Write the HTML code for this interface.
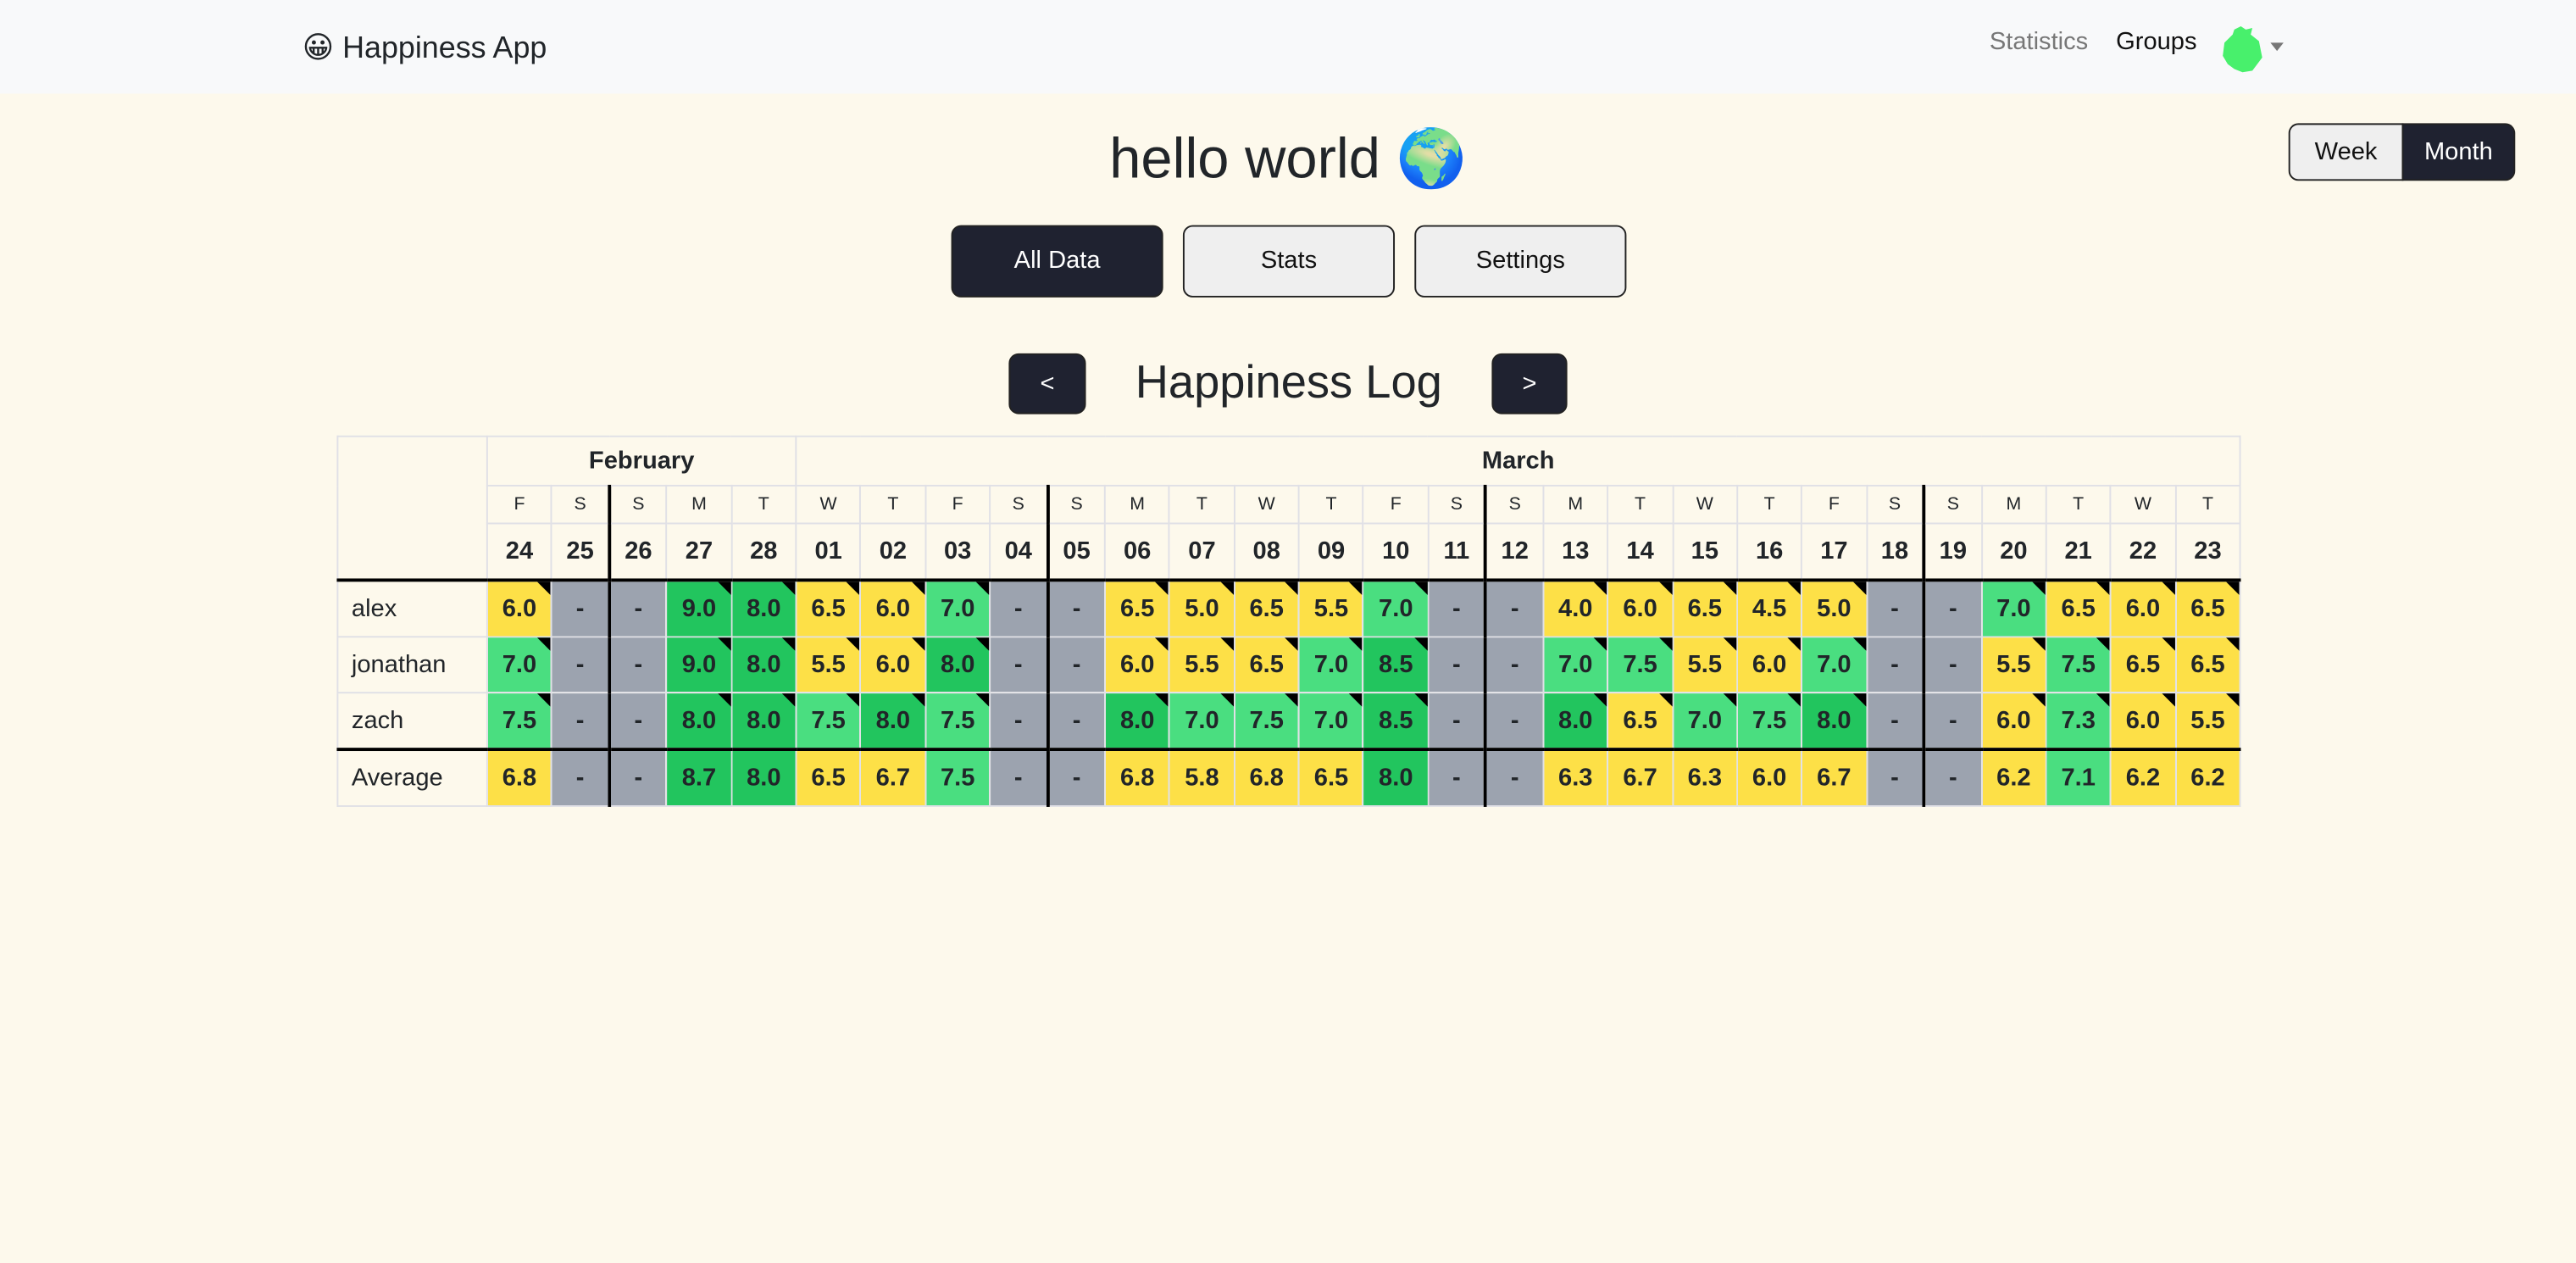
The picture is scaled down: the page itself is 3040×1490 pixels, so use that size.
<!DOCTYPE html>
<html><head><meta charset="utf-8"><style>
html,body{margin:0;padding:0;background:#fdf9ec;width:3040px;height:1490px;overflow:hidden}
#w{width:1568px;height:769px;transform:scale(1.93878);transform-origin:0 0;position:relative;font-family:"Liberation Sans","DejaVu Sans",sans-serif;color:#212529}
.nav{position:absolute;left:0;top:0;width:1568px;height:57px;background:#f8f9fa}
.brand{position:absolute;left:184px;top:18px;font-size:18.5px}
.nl{position:absolute;top:17px;font-size:15px}
.btn{position:absolute;box-sizing:border-box;border:1px solid #222;border-radius:6px;text-align:center;font-size:15px}
.dk{background:#1f2230;color:#fff}.lt{background:#efefef;color:#111}
h1{position:absolute;left:0;width:1568px;top:77px;margin:0;text-align:center;font-size:34.5px;font-weight:500}
.h2{position:absolute;left:691px;top:217px;font-size:28px;font-weight:500}
table{position:absolute;left:205px;top:265px;border-collapse:collapse;table-layout:fixed;width:1159px}
td{border:1px solid #e0e0e6;text-align:center;padding:0;font-size:15px;font-weight:bold;position:relative}
.mh td{height:29px}.dl td{height:22px;font-size:11px;font-weight:500}.dn td{height:33px}
.r td{height:33px}
td.nm{text-align:left;padding-left:8px;font-weight:normal}
.y{background:#fde047}.g{background:#4ade80}.G{background:#22c55e}.x{background:#9ca3af}
.tri::after{content:"";position:absolute;right:0;top:0;border-top:8px solid #000;border-left:8px solid transparent}
.sun{border-left:2px solid #000}
.tb td{border-top:2px solid #000}
</style></head><body><div id="w">
<div class="nav"><div class="brand">😀 Happiness App</div>
<div class="nl" style="left:1211px;color:#777">Statistics</div>
<div class="nl" style="left:1288px;color:#111">Groups</div>
<svg style="position:absolute;left:1350px;top:15px" width="30" height="30" viewBox="0 0 30 30"><path d="M10 3 L14 1 L17 3 L21 2 L20 6 L25 10 L27 20 L24 24 L21 28 L15 29 L10 27 L6 24 L3 19 L4 11 L9 6 Z" fill="#48f06c"/></svg>
<div style="position:absolute;left:1382px;top:26px;border-top:5px solid #777;border-left:4px solid transparent;border-right:4px solid transparent"></div>
</div>
<div class="btn lt" style="left:1393px;top:75px;width:70px;height:35px;line-height:33px;border-radius:6px 0 0 6px">Week</div>
<div class="btn dk" style="left:1462px;top:75px;width:69px;height:35px;line-height:33px;border-radius:0 6px 6px 0">Month</div>
<h1>hello world 🌍</h1>
<div class="btn dk" style="left:579px;top:137px;width:129px;height:44px;line-height:42px">All Data</div>
<div class="btn lt" style="left:720px;top:137px;width:129px;height:44px;line-height:42px">Stats</div>
<div class="btn lt" style="left:861px;top:137px;width:129px;height:44px;line-height:42px">Settings</div>
<div class="btn dk" style="left:614px;top:215px;width:47px;height:37px;line-height:35px">&lt;</div>
<div class="h2">Happiness Log</div>
<div class="btn dk" style="left:908px;top:215px;width:46px;height:37px;line-height:35px">&gt;</div>
<table id="t"></table>
</div>
<script>
var d=["24F","25S","26S","27M","28T","01W","02T","03F","04S","05S","06M","07T","08W","09T","10F","11S","12S","13M","14T","15W","16T","17F","18S","19S","20M","21T","22W","23T"];
var rows=[["alex","6.0 - - 9.0 8.0 6.5 6.0 7.0 - - 6.5 5.0 6.5 5.5 7.0 - - 4.0 6.0 6.5 4.5 5.0 - - 7.0 6.5 6.0 6.5"],
["jonathan","7.0 - - 9.0 8.0 5.5 6.0 8.0 - - 6.0 5.5 6.5 7.0 8.5 - - 7.0 7.5 5.5 6.0 7.0 - - 5.5 7.5 6.5 6.5"],
["zach","7.5 - - 8.0 8.0 7.5 8.0 7.5 - - 8.0 7.0 7.5 7.0 8.5 - - 8.0 6.5 7.0 7.5 8.0 - - 6.0 7.3 6.0 5.5"],
["Average","6.8 - - 8.7 8.0 6.5 6.7 7.5 - - 6.8 5.8 6.8 6.5 8.0 - - 6.3 6.7 6.3 6.0 6.7 - - 6.2 7.1 6.2 6.2"]];
function sun(i){return d[i][2]=="S"&&i>0&&d[i-1][2]=="S"?' sun':'';}
var h='<colgroup><col style="width:91px">';
d.forEach(function(x){h+='<col style="width:'+(x[2]=="S"?35:39.35)+'px">'});
h+='</colgroup><tr class="mh"><td rowspan="3"></td><td colspan="5">February</td><td colspan="23">March</td></tr><tr class="dl">';
d.forEach(function(x,i){h+='<td class="'+sun(i)+'">'+x[2]+'</td>'});
h+='</tr><tr class="dn">';
d.forEach(function(x,i){h+='<td class="'+sun(i)+'">'+x.slice(0,2)+'</td>'});
h+='</tr>';
rows.forEach(function(r,ri){var v=r[1].split(' ');
h+='<tr class="r'+(ri==0||ri==3?' tb':'')+'"><td class="nm">'+r[0]+'</td>';
v.forEach(function(s,i){var c;if(s=='-')c='x';else{var n=parseFloat(s);c=n>=8?'G':n>=7?'g':'y';if(ri<3)c+=' tri';}
h+='<td class="'+c+sun(i)+'">'+s+'</td>'});h+='</tr>';});
document.getElementById('t').innerHTML=h;
</script>
</body></html>
